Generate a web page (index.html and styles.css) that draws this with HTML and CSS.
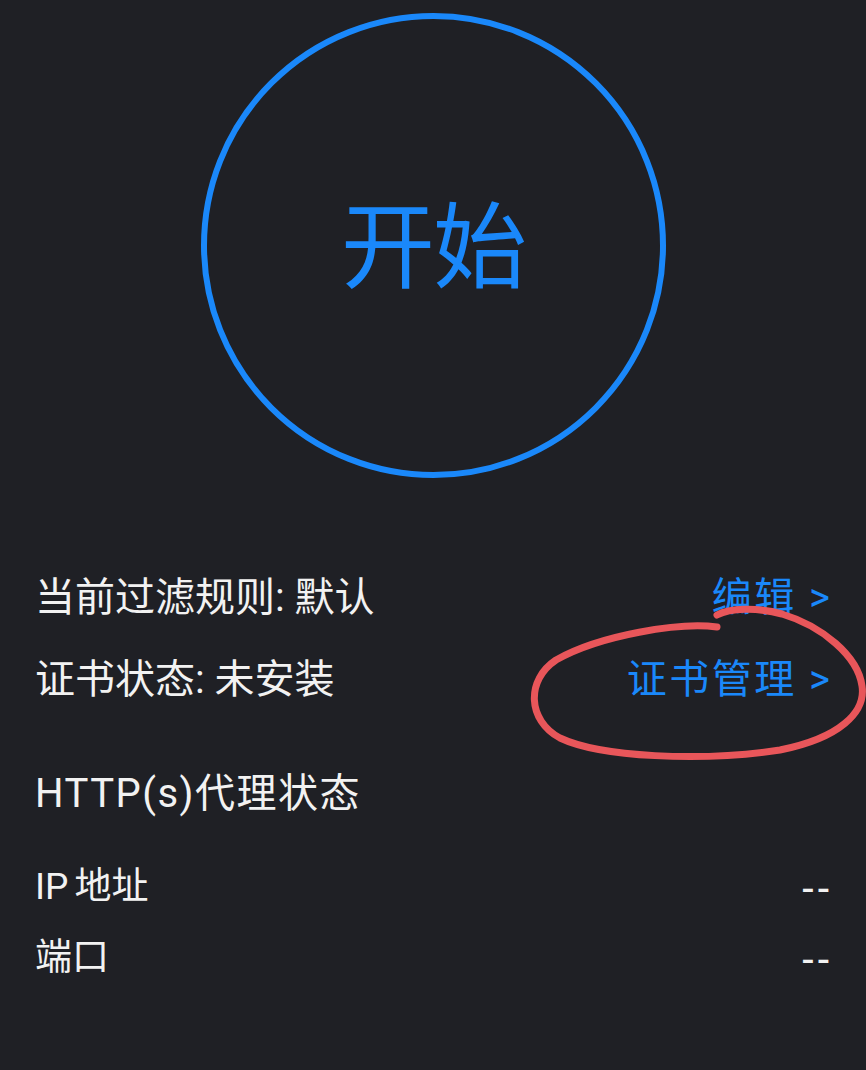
FILE: index.html
```html
<!DOCTYPE html>
<html lang="zh-CN">
<head>
<meta charset="utf-8">
<title>开始</title>
<link rel="stylesheet" href="styles.css">
</head>
<body>
<div class="page">
  <div class="start-wrap">
    <div class="start-circle"><span class="start-label">开始</span></div>
  </div>
  <div class="info">
    <div class="row row-rule">
      <span class="label">当前过滤规则: 默认</span>
      <span class="link">编辑 &gt;</span>
    </div>
    <div class="row row-cert">
      <span class="label">证书状态: 未安装</span>
      <span class="link">证书管理 &gt;</span>
    </div>
    <div class="row row-http">
      <span class="label">HTTP(s)代理状态</span>
    </div>
    <div class="row row-ip row-small">
      <span class="label">IP 地址</span>
      <span class="value">--</span>
    </div>
    <div class="row row-port row-small">
      <span class="label">端口</span>
      <span class="value">--</span>
    </div>
  </div>
  <svg class="annotation" width="866" height="1070" viewBox="0 0 866 1070" aria-hidden="true">
    <path d="M717,627 C680,622 600,635 556,660 C526,680 527,720 560,738 C600,757 700,762 780,750 C840,738 866,712 862,686 C858,656 822,626 782,614 C756,607 730,608 717,615" fill="none" stroke="#e8565a" stroke-width="7" stroke-linecap="round" stroke-linejoin="round"/>
  </svg>
</div>
</body>
</html>
```
FILE: styles.css
```css
html, body {
  margin: 0;
  padding: 0;
  background: #1f2025;
}
body {
  font-family: Roboto, "Noto Sans CJK SC", "Noto Sans", sans-serif;
  color: #f2f2f2;
}
.page {
  position: relative;
  width: 866px;
  height: 1070px;
  overflow: hidden;
}
.start-wrap {
  display: flex;
  justify-content: center;
  padding-top: 13px;
}
.start-circle {
  width: 465px;
  height: 465px;
  box-sizing: border-box;
  border: 6px solid #1a88fa;
  border-radius: 50%;
  display: flex;
  align-items: center;
  justify-content: center;
}
.start-label {
  font-family: "Noto Sans CJK SC", sans-serif;
  font-size: 94px;
  line-height: 1;
  color: #1a88fa;
  letter-spacing: -2px;
  margin-top: -12px;
}
.info {
  padding: 0 36px 0 35px;
  margin-top: 98px;
}
.row {
  display: flex;
  justify-content: space-between;
  align-items: center;
  height: 44px;
  font-size: 40px;
  line-height: 44px;
}
.row-small {
  font-size: 37px;
}
.row-cert { margin-top: 38px; }
.row-http { margin-top: 70px; letter-spacing: 1.5px; }
.row-ip { margin-top: 49px; word-spacing: -3px; }
.row-port { margin-top: 27px; }
.label { color: #f2f2f2; }
.link {
  color: #1a88fa;
  letter-spacing: 2.5px;
  margin-right: -2.5px;
}
.value {
  color: #f2f2f2;
  font-family: "Liberation Sans", sans-serif;
  font-size: 40px;
  letter-spacing: 2px;
  margin-right: -2px;
}
.annotation {
  position: absolute;
  left: 0;
  top: 0;
  pointer-events: none;
}
```
